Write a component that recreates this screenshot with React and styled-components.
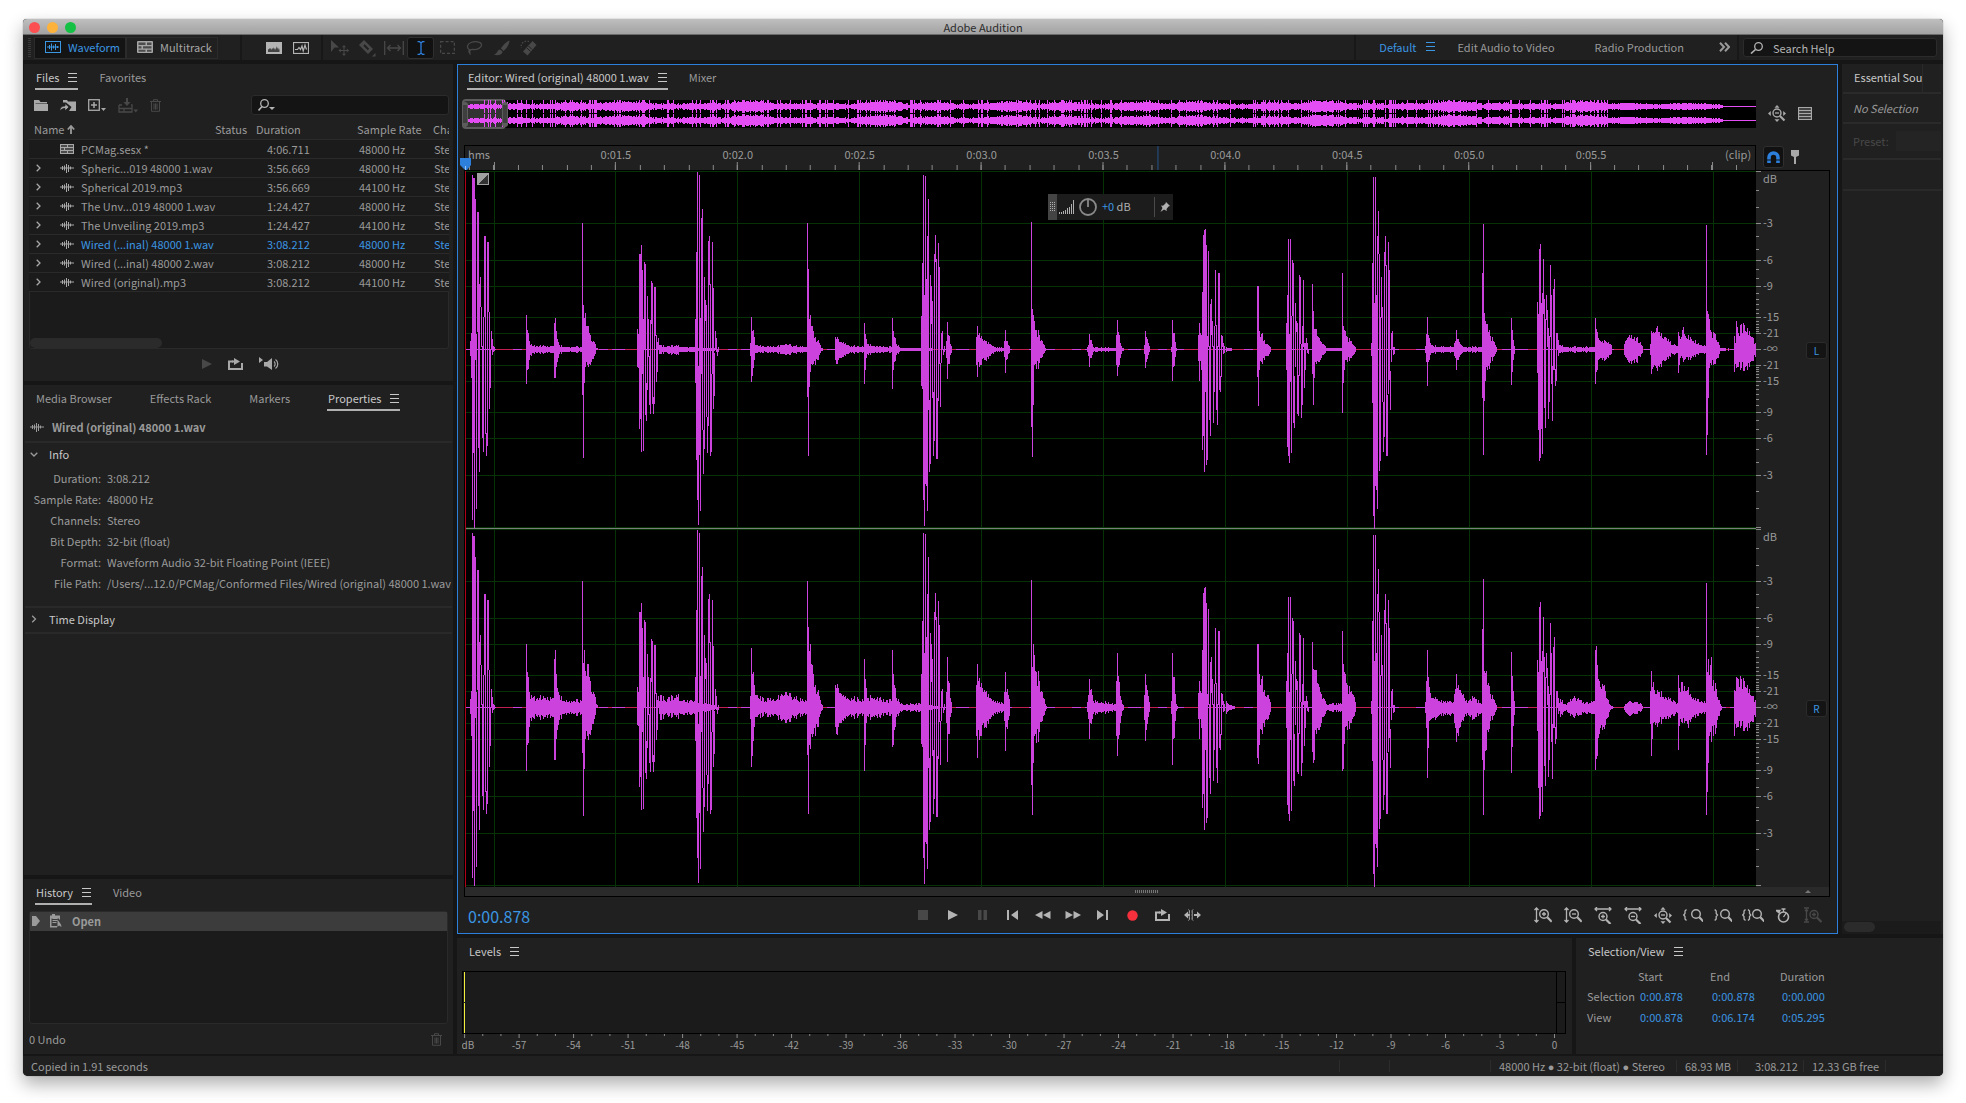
import React from 'react';
import styled, { createGlobalStyle, css } from 'styled-components';

const colors = {
  gap: '#161616',
  panel: '#202020',
  well: '#1b1b1b',
  line: '#2a2a2a',
  text: '#9a9a9a',
  bright: '#c8c8c8',
  dim: '#484848',
  blue: '#3b96e3',
  accent: '#2d7fdc',
  wave: '#cc42dc',
  waveLight: '#e44cf4',
  grid: '#053305',
};

const GlobalStyle = createGlobalStyle`
  * { box-sizing: border-box; }
  body {
    margin: 0;
    background: #fff;
    color: ${colors.text};
    font-family: "Noto Sans CJK SC", "Liberation Sans", sans-serif;
    font-size: 11px;
    line-height: 16px;
  }
  button, input {
    font: inherit;
    color: inherit;
    background: none;
    border: 0;
    padding: 0;
    margin: 0;
    outline: none;
  }
  svg { display: block; }
`;

/* ---------- waveform data ---------- */

// one [top, bottom] pair per pixel column, measured from the centre line
const columns = [
  { x: 5, cols: [[8,-6],[16,-28],[174,-170],[171,-103],[171,-178],[150,-10],[15,-159],[137,18],[137,-98],[65,-122],[72,43],[42,3],[3,-88],[32,-102],[113,33],[113,-84],[-84,-106],[107,-96],[107,38],[37,-59],[0,-38],[18,0],[10,-5],[3,-2],[2,-1]] },
  { x: 172, cols: [[20,-17],[15,-18],[95,-79],[95,-69],[104,-102],[79,-24],[30,-101],[87,0],[85,-65],[-34,-71],[53,-40],[30,-7],[-7,-55],[29,-64],[68,26],[66,-54],[-48,-64],[62,-54],[62,14],[14,-32],[7,-22],[11,0],[4,-4]] },
  { x: 230, cols: [[30,-33],[97,-110],[177,-150],[-17,-175],[174,-105],[31,-161],[131,-24],[140,-80],[-81,-124],[72,-99],[49,29],[44,-67],[-68,-103],[108,-76],[113,65],[65,-106],[-25,-102],[107,-24],[61,-59],[-4,-46],[18,0],[11,-2],[0,-6],[2,-2]] },
  { x: 456, cols: [[33,-36],[86,-39],[174,-150],[54,-176],[173,-134],[70,-136],[113,-161],[150,-60],[-51,-122],[74,-114],[63,26],[48,-48],[-43,-106],[95,-91],[114,88],[90,-109],[-49,-109],[106,-51],[82,-14],[-14,-57],[16,-13],[18,0],[0,-5],[3,-2]] },
  { x: 733, cols: [[14,-11],[26,-31],[16,-11],[14,-20],[57,-100],[114,-86],[119,-122],[120,-42],[104,-115],[13,-110],[98,3],[3,-70],[45,-86],[50,15],[28,3],[3,-73],[23,-42],[79,24],[24,-60],[3,-75],[76,3],[76,-40],[-27,-42],[14,-27],[13,3],[6,-4],[3,-3]] },
  { x: 821, cols: [[26,-20],[54,-97],[110,-106],[15,-113],[110,-32],[33,-103],[89,34],[86,-73],[-27,-78],[46,-17],[28,18],[26,-64],[-26,-66],[74,-26],[72,6],[5,-68],[23,-55],[69,3],[6,-38],[6,-20],[11,0],[6,-3],[0,-4]] },
  { x: 906, cols: [[6,-6],[86,-53],[172,-166],[46,-179],[172,-136],[54,-140],[113,-159],[138,96],[95,-121],[32,-111],[72,32],[42,-52],[-53,-102],[97,-87],[113,84],[84,-106],[-46,-106],[107,-44],[79,-30],[-22,-60],[16,-12],[18,0],[2,-5],[2,-4]] },
  { x: 1072, cols: [[47,-23],[35,-80],[100,-111],[105,-108],[46,-79],[56,-104],[90,36],[50,-58],[30,-78],[54,30],[39,3],[21,-69],[13,-52],[84,13],[54,-34],[-17,-71],[60,-20],[70,-20],[-20,-36],[16,-31],[16,0],[9,-6],[4,-3]] },
];

// envelope points: [x, up, down]
const leftStart = [
  [0,0,0],[60,0,0],[61,34,34],[62,19,20],[63,16,19],[64,8,10],[67,3,3],[88,3,3],[89,26,28],[90,31,28],[91,18,17],[92,10,12],[94,4,4],[98,2,2],[116,2,2],
  [117,126,45],[118,44,108],[119,31,33],[120,36,17],[122,23,15],[124,16,14],[126,8,12],[129,7,6],[131,1,0],[133,0,0],[193,0,0],[195,4,4],[200,2,2],[211,4,5],[216,2,2],[229,2,2],
  [254,0,0],[284,0,0],[285,6,6],[286,32,32],[287,18,26],[288,19,18],[289,12,10],[290,4,3],[300,2,2],[322,4,4],[341,2,2],
  [342,126,47],[343,80,106],[344,30,37],[345,34,22],[346,23,14],[348,18,14],[350,12,15],[352,8,10],[354,6,5],[356,1,1],[358,0,0],[369,0,0],
  [370,12,10],[371,10,14],[373,10,10],[376,7,8],[380,6,6],[386,3,3],[398,2,2],[399,26,34],[400,15,20],[401,10,8],[403,5,5],[406,3,3],[426,2,2],
  [427,31,39],[428,18,20],[429,12,12],[431,5,5],[435,1,1],[455,1,1],[480,0,0],[481,8,8],[482,27,29],[483,14,14],[484,13,14],[485,5,5],[487,0,0],[510,0,0],
  [511,12,15],[512,23,27],[513,14,12],[515,11,15],[517,10,9],[520,8,10],[524,5,6],[530,2,2],[538,1,1],[539,8,7],[540,19,23],[541,8,10],[543,4,4],[545,0,0],[565,0,0],
  [566,127,77],[567,40,107],[568,34,55],[569,28,15],[571,19,19],[574,14,13],[577,8,7],[580,1,1],[582,0,0],[621,0,0],[623,4,6],[624,15,17],[625,9,8],[628,2,2],[650,1,1],
  [651,14,15],[652,29,26],[653,17,17],[655,6,8],[657,1,1],[659,0,0],[678,0,0],[679,4,4],[680,18,18],[681,12,12],[683,6,5],[685,0,0],[705,0,0],[706,2,2],[707,29,31],[708,16,17],[709,16,16],[711,1,1],[713,0,0],
  [760,0,0],[761,2,2],[763,1,1],[770,0,0],[791,0,0],[792,63,27],[793,63,56],[794,18,20],[796,15,12],[799,9,10],[803,4,6],[806,0,0],[846,0,0],
  [847,65,24],[848,38,55],[849,20,28],[850,20,12],[852,13,11],[855,8,10],[858,5,5],[861,1,1],[876,1,1],[877,76,63],[878,23,33],[880,18,10],[882,12,12],[885,8,8],[888,4,5],[891,0,0],[959,0,0],
];

const leftEnd = [
  [960,3,3],[961,15,12],[962,32,36],[963,14,12],[965,6,5],[968,3,3],[973,2,2],[988,2,2],[990,8,8],[991,19,20],[992,10,10],[995,5,5],[998,2,2],[1016,2,2],
  [1017,76,48],[1018,125,105],[1019,36,51],[1020,28,31],[1021,25,17],[1023,17,16],[1025,13,13],[1028,8,7],[1032,0,0],[1045,0,0],[1046,31,35],[1047,19,22],[1048,9,10],[1050,0,0],[1094,0,0],
  [1095,4,3],[1100,2,2],[1129,2,2],[1130,31,34],[1131,20,22],[1132,17,20],[1133,11,10],[1137,8,10],[1142,6,7],[1146,4,4],[1147,0,0],[1158,0,0],
  [1159,5,5],[1162,11,10],[1166,14,14],[1171,11,12],[1175,7,7],[1177,3,3],[1178,0,0],[1184,0,0],[1185,5,5],[1186,18,24],[1188,17,17],[1191,21,18],[1195,13,14],[1199,12,11],[1204,7,6],[1208,4,4],[1212,3,3],
  [1213,17,23],[1215,10,8],[1217,19,8],[1219,15,10],[1222,10,7],[1225,12,10],[1230,9,7],[1235,4,3],[1240,3,3],[1241,124,105],[1242,38,85],[1243,35,48],[1244,30,18],[1246,17,15],[1249,16,14],[1252,7,8],[1255,1,1],[1268,0,0],
  [1269,13,22],[1270,6,14],[1271,28,18],[1273,16,17],[1276,25,18],[1280,18,17],[1285,13,12],[1291,5,6],
];

const rightEnd = [
  [960,5,5],[961,26,20],[962,57,70],[963,30,40],[964,20,13],[966,9,11],[970,10,12],[975,5,6],[988,5,6],[990,18,20],[991,33,34],[992,19,25],[996,14,14],[1000,6,6],[1005,8,9],[1010,8,9],[1016,3,5],
  [1017,78,52],[1018,128,107],[1019,36,62],[1020,34,43],[1022,22,22],[1025,13,13],[1028,8,8],[1032,0,0],[1045,0,0],[1046,55,65],[1047,31,39],[1048,16,18],[1050,0,0],[1094,0,0],
  [1095,8,9],[1101,2,2],[1105,8,8],[1110,9,8],[1120,4,5],[1129,6,6],[1130,57,62],[1131,61,51],[1132,42,48],[1134,26,26],[1138,21,19],[1141,9,11],[1145,2,2],[1148,0,0],[1158,0,0],
  [1160,3,4],[1165,6,8],[1170,5,6],[1176,3,3],[1178,0,0],[1184,0,0],[1185,16,16],[1186,36,48],[1187,20,31],[1188,25,15],[1190,13,17],[1194,15,14],[1198,10,11],[1206,6,7],[1212,4,5],
  [1213,32,42],[1214,19,18],[1216,25,14],[1218,16,10],[1222,17,16],[1225,13,14],[1232,8,8],[1240,4,4],[1241,124,107],[1242,35,84],[1243,48,55],[1245,42,24],[1248,27,28],[1251,18,20],[1253,7,8],[1257,0,0],[1268,0,0],
  [1269,17,28],[1271,30,20],[1276,28,18],[1280,20,20],[1285,12,14],[1291,6,8],
];

const widen = (v) => {
  if (v < 5) return v * 3;
  return v < 35 ? Math.round(v * 1.85) : v;
};
const rightStart = leftStart.map(([x, up, down]) => [x, widen(up), widen(down)]);

const noise = (n) => {
  const v = Math.sin(n * 127.1 + 31.7) * 43758.5453;
  return v - Math.floor(v);
};

const bar = (x, top, bottom) => `M${x} ${top}h1V${bottom}h-1z`;

const buildChannel = (points, centre) => {
  let d = '';
  for (let i = 0; i < points.length - 1; i++) {
    const [x1, u1, d1] = points[i];
    const [x2, u2, d2] = points[i + 1];
    for (let x = x1; x < x2; x++) {
      const t = (x - x1) / (x2 - x1);
      const wobble = x === x1 ? 1 : 0.65 + noise(x) * 0.7;
      const up = Math.round((u1 + (u2 - u1) * t) * wobble);
      const down = Math.round((d1 + (d2 - d1) * t) * wobble);
      if (up + down > 0) d += bar(x, centre - up, centre + down + 1);
    }
  }
  columns.forEach(({ x, cols }) => {
    cols.forEach(([hi, lo], i) => {
      d += bar(x + i, centre - hi, centre - lo + 1);
    });
  });
  return d;
};

const WAVE_W = 1291;
const WAVE_H = 716;
const leftPath = buildChannel([...leftStart, ...leftEnd], 178);
const rightPath = buildChannel([...rightStart, ...rightEnd], 536);

const buildOverview = () => {
  let d = '';
  for (let x = 0; x < WAVE_W; x++) {
    let h;
    if (x > 1257) h = 0;
    else if (x > 1142) h = 1 + Math.round(Math.abs(Math.sin(x / 19)) * 1.4 + noise(x) * 0.8);
    else if (x < 38) h = noise(x * 3) > 0.8 ? 6 : 1 + Math.round(noise(x) * 1.6);
    else {
      const swell = Math.abs(Math.sin(x / 14) + Math.sin(x / 37)) * 1.3;
      h = noise(x * 7) > 0.84 ? 6 : 1 + Math.round(swell + noise(x) * 2);
    }
    const top = Math.min(h, 6);
    d += bar(x, 6 - top, 7 + top) + bar(x, 20 - top, 21 + top);
  }
  return d;
};
const overviewPath = buildOverview();

const pct = (v, total) => `${(v / total) * 100}%`;

const majorTicks = [...Array(11)].map((_, i) => Math.floor(29 + i * 121.9));
const minorTicks = [...Array(53)].map((_, i) => Math.floor(4.6 + i * 24.38));
const gridLevels = [0, 52, 89, 115, 146, 162, 194, 210, 241, 267, 304, 356];
const dbMinor = [19, 36, 65, 78, 98, 107, 122, 128, 133, 138, 142, 150, 153, 156, 158, 160];
const dbLabels = [
  [52, '-3'], [89, '-6'], [115, '-9'], [146, '-15'], [162, '-21'], [178, '-∞'],
  [194, '-21'], [210, '-15'], [241, '-9'], [267, '-6'], [304, '-3'],
];

/* ---------- icons ---------- */

const lens = (x, y, r) => (
  <>
    <circle cx={x} cy={y} r={r} fill="none" stroke="currentColor" strokeWidth="1.4" />
    <path d={`M${x + r - 1} ${y + r - 1}l4.5 4.5`} stroke="currentColor" strokeWidth="2.2" />
  </>
);
const line = { fill: 'none', stroke: 'currentColor', strokeWidth: 1.3 };

const icons = {
  waveform: [16, 12, <><rect x=".5" y=".5" width="15" height="11" {...line} strokeWidth="1" /><path d="M2 6h12M4.5 4v4M6.5 2.500v7M8.500 4.500v3M10.500 3v6M12.500 5v2" {...line} strokeWidth="1" /></>],
  multitrack: [16, 12, <><rect width="16" height="12" rx="1" fill="currentColor" /><path d="M1.500 1.500h7v2.500h-7zM10 1.500h4.500v2.500H10zM1.500 5.200h3v2.300h-3zM6 5.200h8.500v2.300H6zM1.500 8.700h7v2h-7zM10 8.700h4.500v2H10z" fill="#4c4c4c" /></>],
  session: [14, 10, <><rect width="14" height="10" fill="currentColor" /><path d="M1 1h6v2H1zM8 1h5v2H8zM1 4h3v2H1zM5 4h8v2H5zM1 7h6v2H1zM8 7h5v2H8z" fill="#4c4c4c" /></>],
  spectral: [16, 12, <><rect width="16" height="12" fill="currentColor" /><path d="M2 10V7.500l1-.5V6l1 1 1-1 .5 2 1-2 .5 1V5l1 2 .5-1 .5 2 1-2 .5-2 .5 3 1-2 .5 3 .5-2 .5 2V10z" fill="#444" /></>],
  pitch: [16, 12, <><rect x=".5" y=".5" width="15" height="11" {...line} strokeWidth="1.200" /><path d="M2 7.500h2.500L6 5.500l1.500 2L9 4l1.200 5L12 3l1.200 4H14" {...line} strokeWidth="1.200" /></>],
  move: [18, 16, <><path d="M0 0l8 7.500H3.500L0 12z" fill="currentColor" /><path d="M13 6v9M8.500 10.500h9" {...line} strokeWidth="1" /><path d="M13 5l2 2.200h-4zM13 16l2-2.200h-4zM7.500 10.500l2.200-2v4zM18 10.500l-2.200-2v4z" fill="currentColor" /></>],
  razor: [18, 18, <><path d="M6 1l9 9-5 5-9-9z" fill="currentColor" /><path d="M6 6l4.500 4.500" stroke="#202020" strokeWidth="2" /><path d="M17.500 14v3.500H14z" fill="currentColor" /></>],
  slip: [20, 14, <path d="M.7 0v14M19.300 0v14M3.500 7h13M6.500 4L3.500 7l3 3M13.500 4l3 3-3 3" {...line} />],
  ibeam: [8, 14, <path d="M.5.7h2L4 2l1.500-1.300h2M4 2v10M.5 13.300h2L4 12l1.500 1.300h2" {...line} />],
  marquee: [15, 13, <rect x=".6" y=".6" width="13.800" height="11.800" {...line} strokeDasharray="3 2" />],
  lasso: [17, 14, <path d="M4 9C0 7 1 3 5 1.500s10-1 10.500 2S11 9 7 8.500 3 12 4.500 13.500M4 9c-2 1-1 3 .5 2.500" {...line} />],
  brush: [16, 16, <path d="M15.500.5c-3 1-7 5-8.500 8l2.500 2.500c3-2 6-7 6-10.500zM6 9.500c-3 0-2 4-6 5 3 1.500 8.500.5 8.500-3z" fill="currentColor" />],
  heal: [17, 16, <><path d="M12.500 1l4 4L7.500 15.500l-4.500-4z" fill="currentColor" /><path d="M8.500 6l3.500 3.500M7 8l3.500 3.500" stroke="#202020" strokeWidth="1" /><path d="M9 1.500C5 0 0 3 1.500 8" {...line} strokeDasharray="1.500 1.500" /></>],
  menu: [9, 9, <path d="M0 .5h9M0 4.500h9M0 8.500h9" {...line} strokeWidth="1" />],
  more: [11, 10, <path d="M1 .8L5 5 1 9.200M6 .8L10 5 6 9.200" {...line} strokeWidth="2" />],
  search: [14, 12, <><circle cx="8.500" cy="4.500" r="3.800" {...line} /><path d="M5.500 7.500L1 11.500" {...line} strokeWidth="1.600" /></>],
  searchDrop: [17, 12, <><circle cx="6.500" cy="4.500" r="3.800" {...line} /><path d="M4 7.500L.5 11.500" {...line} strokeWidth="1.600" /><path d="M11 8h6l-3 3z" fill="currentColor" /></>],
  folder: [14, 11, <path d="M0 0h5l1.500 2H13v1.500H1.500V4H14v7H0z" fill="currentColor" />],
  importFile: [16, 13, <><path d="M3 1h4l1 1.500h8V12H9l2.500-4L6 3.500H3z" fill="currentColor" /><path d="M0 12c0-4 2-5 5-5V4.500L9 8l-4 4V9.500C3 9.500 1.500 10 0 12z" fill="currentColor" stroke="#202020" strokeWidth=".8" /></>],
  newFile: [18, 13, <><rect x=".7" y=".7" width="10.600" height="10.600" {...line} /><path d="M6 3v6M3 6h6" {...line} strokeWidth="1.500" /><path d="M13 9h5l-2.500 3z" fill="currentColor" /></>],
  insert: [20, 15, <><path d="M8 0h2v4h2.500L9 8 5.500 4H8z" fill="currentColor" /><path d="M1 7h3M13 7h1v7H1V7M1 10.500h13M6 10.500V14" {...line} /><path d="M15.500 11.500h4.500l-2.200 3z" fill="currentColor" /></>],
  trash: [11, 13, <path d="M0 2.500h11M3.500 2V.7h4V2M1.500 3v9.300h8V3M4 4.500v6M5.500 4.500v6M7 4.500v6" {...line} strokeWidth="1" />],
  arrowUp: [8, 9, <path d="M4 9V1.500M.8 4.500L4 1l3.200 3.500" {...line} strokeWidth="1.800" />],
  chevron: [5, 8, <path d="M.7.7L4 4 .7 7.300" {...line} />],
  chevronDown: [8, 5, <path d="M.7.7L4 4 7.300.7" {...line} />],
  clip: [14, 10, <path d="M0 5h14M2.500 3v4M4.500 2.500v5M6.500 1v9M8.500 2v7M10.500 3.500v3" {...line} strokeWidth="1" />],
  play: [10, 10, <path d="M0 0l10 5-10 5z" fill="currentColor" />],
  loop: [15, 12, <><path d="M5 3.500H1V11h13V5" {...line} strokeWidth="2" /><path d="M6 0l6 3.500L6 7V4.500H4v-2h2z" fill="currentColor" /></>],
  speaker: [21, 14, <><path d="M0 0l4 3-4 3zM5 5h3l5-4v12L8 9.500H5z" fill="currentColor" /><path d="M15 4.500c1.500 1 1.500 4 0 5M16.500 2.500c3 2 3 7 0 9" {...line} strokeWidth="1.200" /></>],
  stop: [10, 10, <rect width="10" height="10" fill="currentColor" />],
  pause: [9, 10, <path d="M0 0h3.500v10H0zM5.500 0H9v10H5.500z" fill="currentColor" />],
  toStart: [11, 10, <path d="M0 0h2v10H0zM11 0v10L4 5z" fill="currentColor" />],
  toEnd: [11, 10, <path d="M9 0h2v10H9zM0 0v10l7-5z" fill="currentColor" />],
  rewind: [16, 8, <path d="M7.500 0v8L0 4zM15.500 0v8L8 4z" fill="currentColor" />],
  forward: [16, 8, <path d="M.5 0v8L8 4zM8.500 0v8L16 4z" fill="currentColor" />],
  record: [11, 11, <circle cx="5.500" cy="5.500" r="5.200" fill="#f4303c" />],
  skip: [17, 12, <><path d="M0 6l4-3.500v2.500h1v2H4v2.500zM17 6l-4-3.500v2.500h-3v2h3v2.500z" fill="currentColor" /><path d="M4.500.5c2 1 0 4 1 5.500-1 1.500 1 4.500-1 5.500M9 .5c-2 1 0 4-1 5.500 1 1.500-1 4.500 1 5.500" {...line} strokeWidth="1" /></>],
  zoomInV: [18, 16, <><path d="M2.500 1v14M.5 3l2-2 2 2M.5 13l2 2 2-2" {...line} />{lens(10, 7, 4.300)}<path d="M10 5v4M8 7h4" {...line} /></>],
  zoomOutV: [18, 16, <><path d="M2.500 1v14M.5 3l2-2 2 2M.5 13l2 2 2-2" {...line} />{lens(10, 7, 4.300)}<path d="M8 7h4" {...line} /></>],
  zoomInH: [18, 17, <><path d="M1 2h16M3 0L1 2l2 2M15 0l2 2-2 2" {...line} />{lens(9, 9.500, 4)}<path d="M9 7.500v4M7 9.500h4" {...line} /></>],
  zoomOutH: [18, 17, <><path d="M1 2h16M3 0L1 2l2 2M15 0l2 2-2 2" {...line} />{lens(9, 9.500, 4)}<path d="M7 9.500h4" {...line} /></>],
  zoomFull: [18, 17, <><path d="M9 0l2.500 2.800h-5zM9 17l2.500-2.800h-5zM0 8.500L2.800 6v5zM18 8.500L15.200 6v5z" fill="currentColor" />{lens(9, 8, 4)}<path d="M7 8h4" {...line} /></>],
  zoomStart: [20, 14, <><path d="M3.500 1.500L2 3v2.500L.7 7 2 8.500V11l1.500 1.500" {...line} />{lens(13, 6, 4.300)}</>],
  zoomEnd: [18, 14, <><path d="M.7 1.500L2.200 3v2.500L3.500 7 2.200 8.500V11L.7 12.500" {...line} />{lens(11, 6, 4.300)}</>],
  zoomSel: [22, 14, <><path d="M3.500 1.500L2 3v2.500L.7 7 2 8.500V11l1.500 1.500M6 1.500L7.500 3v2.500L8.800 7 7.500 8.500V11L6 12.500" {...line} />{lens(15, 6, 4.300)}</>],
  timer: [14, 15, <><circle cx="7.500" cy="9" r="5" {...line} strokeWidth="1.600" /><path d="M5.500 1h4M7.500 1v3M7.500 9l3-4.500M0 2.500l3 2.500 1-2.500z" fill="currentColor" stroke="currentColor" strokeWidth="1.300" /></>],
  zoomSlot: [18, 16, <><path d="M0 1h5M0 15h5M2.500 2v12M1 4l1.500-1.500L4 4M1 12l1.500 1.500L4 12" {...line} />{lens(10, 7.500, 4)}<path d="M10 5.500v4M8 7.500h4" {...line} /></>],
  list: [14, 13, <path d="M.5.5h13v12H.5zM1 3.500h12M1 6.500h12M1 9.500h12" {...line} />],
  magnet: [13, 13, <><path d="M2 12V6.500a4.500 4.500 0 0 1 9 0V12" {...line} strokeWidth="3.600" /><path d="M0 9h5M8 9h5" stroke="#111" strokeWidth="1" /></>],
  marker: [8, 14, <path d="M0 0h8v5.500L5 7v7H3V7L0 5.500z" fill="currentColor" />],
  bars: [15, 14, <path d="M.5 12v2M2.500 12v2M4.500 11v3M6.500 10v4M8.500 8v6M10.500 7v7M12.500 4v10M14.500 0v14" {...line} strokeWidth="1" />],
  knob: [18, 18, <><circle cx="9" cy="9" r="8" {...line} strokeWidth="1.800" stroke="#8a8a8a" /><path d="M9 2v7" {...line} strokeWidth="1.800" stroke="#8a8a8a" /></>],
  pin: [10, 10, <path d="M6 0l4 4-1.500.5L6.500 7l.3 2L4 7.500.5 10 2.500 6 1 3.500l2 .3L5.500 1.500z" fill="currentColor" />],
  grip: [9, 10, <path d="M2.500 0v10M4.500 0v10M6.500 0v10" {...line} strokeWidth="1" strokeDasharray="1 1" />],
  historyOpen: [12, 14, <><path d="M0 1.500h2V0h3v1.500h5V6L9 5v-.500H1.500V12H7v1.500H0z" fill="currentColor" /><path d="M2.500 4.500h5M2.500 6.500h5M2.500 8.500h4" {...line} strokeWidth="1" /><path d="M7.500 5.500V13l1.500-1.500 2.500 1.500-.5-2.500z" fill="currentColor" /></>],
  here: [8, 10, <path d="M0 0h4l4 5-4 5H0z" fill="currentColor" />],
};

const Icon = ({ name }) => {
  const [w, h, shape] = icons[name];
  return (
    <svg width={w} height={h} viewBox={`0 0 ${w} ${h}`} aria-hidden="true">
      {shape}
    </svg>
  );
};

/* ---------- frame ---------- */

const Page = styled.div`
  height: 100vh;
  padding: 19px 23px 27px;
  display: flex;
`;

const Window = styled.main`
  flex: 1;
  min-width: 0;
  display: flex;
  flex-direction: column;
  background: ${colors.gap};
  border-radius: 4px 4px 5px 5px;
  box-shadow: 0 0 1px #555, 0 8px 18px rgba(0, 0, 0, 0.32);
`;

const TitleBar = styled.header`
  height: 16px;
  flex: none;
  display: grid;
  grid-template-columns: 1fr auto 1fr;
  align-items: center;
  padding: 0 6px 1px;
  background: linear-gradient(#bfbfbf, #a2a2a2);
  border-bottom: 1px solid #6a6a6a;
  border-radius: 4px 4px 0 0;
  color: #2b2b2b;
`;

const Lights = styled.div`
  display: flex;
  gap: 7px;
`;

const Light = styled.button`
  width: 11px;
  height: 11px;
  border-radius: 50%;
  background: ${props => props.$color};
`;

const Toolbar = styled.div`
  height: 25px;
  flex: none;
  display: flex;
  align-items: center;
  background: ${colors.panel};
`;

const Grip = styled.span`
  width: 3px;
  height: 20px;
  margin: 0 3px 0 5px;
  background: repeating-linear-gradient(#3a3a3a 0 1px, transparent 1px 2px);
`;

const ModeButton = styled.button`
  display: flex;
  align-items: center;
  gap: 7px;
  height: 22px;
  width: 92px;
  padding: 0 0 2px 10px;
  border: 1px solid #2b2b2b;
  background: ${props => (props.$active ? '#141414' : colors.panel)};
  color: ${props => (props.$active ? colors.blue : '#a6a6a6')};
`;

const Divider = styled.span`
  width: 2px;
  height: 25px;
  background: #181818;
`;

const ToolGroup = styled.div`
  display: flex;
  align-items: center;
  justify-content: ${props => (props.$end ? 'flex-end' : 'flex-start')};
  gap: ${props => props.$gap || 0}px;
  padding: ${props => props.$pad || 0};
`;

const Tool = styled.button`
  width: ${props => props.$width || 27}px;
  height: 22px;
  display: flex;
  align-items: center;
  justify-content: center;
  border-radius: 3px;
  color: ${props => (props.$bright ? '#b4b4b4' : colors.dim)};
  ${props => props.$active && css`
    background: #111;
    border: 1px solid #2f2f2f;
    color: ${colors.accent};
  `}
`;

const Workspaces = styled.nav`
  margin-left: auto;
  display: flex;
  align-items: center;
`;

const Workspace = styled.button`
  display: flex;
  align-items: center;
  gap: 10px;
  padding-bottom: 2px;
  margin-left: ${props => props.$space}px;
  white-space: nowrap;
  color: ${props => (props.$active ? colors.blue : colors.text)};
`;

const SearchBox = styled.label`
  display: flex;
  align-items: center;
  gap: 9px;
  flex: none;
  width: ${props => props.$width}px;
  height: ${props => props.$height}px;
  margin: ${props => props.$margin || 0};
  padding-left: 6px;
  background: #141414;
  border: 1px solid #2b2b2b;
  border-radius: 3px;
  color: #b4b4b4;

  input {
    flex: 1;
    min-width: 0;
  }
  input::placeholder {
    color: #b4b4b4;
    opacity: 1;
  }
`;

const Body = styled.div`
  flex: 1;
  min-height: 0;
  display: flex;
  gap: 4px;
  padding: 4px 0 2px 1px;
`;

const Column = styled.div`
  display: flex;
  flex-direction: column;
  gap: 4px;
  min-width: 0;
  min-height: 0;
  ${props => (props.$width ? `flex: none; width: ${props.$width}px;` : 'flex: 1;')}
`;

const Split = styled.div`
  display: flex;
  gap: 4px;
  min-height: 0;
  ${props => (props.$height ? `flex: none; height: ${props.$height}px;` : 'flex: 1;')}
`;

const Panel = styled.section`
  display: flex;
  flex-direction: column;
  min-width: 0;
  min-height: 0;
  background: ${colors.panel};
  ${props => (props.$height ? `flex: none; height: ${props.$height}px;` : '')}
  ${props => (props.$width ? `flex: none; width: ${props.$width}px;` : '')}
  ${props => (!props.$height && !props.$width ? 'flex: 1;' : '')}
`;

const Tabs = styled.nav`
  display: flex;
  flex: none;
  align-items: flex-start;
  gap: ${props => props.$gap || 20}px;
  padding: ${props => props.$top || 5}px 0 0 ${props => props.$left || 11}px;
  height: ${props => props.$height || 30}px;
`;

const Tab = styled.button`
  display: flex;
  align-items: center;
  gap: 9px;
  height: 21px;
  padding: 0 1px 3px;
  white-space: nowrap;
  color: ${props => (props.$active ? colors.bright : colors.text)};
  border-bottom: 2px solid ${props => (props.$active && !props.$plain ? '#b0b0b0' : 'transparent')};
`;

/* ---------- left column ---------- */

const FileTools = styled.div`
  display: flex;
  align-items: center;
  gap: 12px;
  height: 22px;
  padding: 0 4px 0 10px;
`;

const FileTool = styled.button`
  flex: none;
  display: flex;
  color: ${props => (props.$off ? colors.dim : '#a8a8a8')};
`;

const FileList = styled.div`
  height: 229px;
  margin: 4px 4px 0 5px;
  display: flex;
  flex-direction: column;
  overflow: hidden;
`;

const FileTable = styled.table`
  width: 100%;
  table-layout: fixed;
  border-collapse: collapse;

  th {
    height: 19px;
    padding: 0 0 0 5px;
    text-align: left;
    font-weight: 400;
    white-space: nowrap;
  }
  td {
    height: 19px;
    padding: 0 0 0 ${props => props.$indent || 5}px;
    white-space: nowrap;
    border-top: 1px solid ${colors.line};
    border-bottom: 1px solid ${colors.line};
  }
  td:nth-child(3) { padding-left: 16px; }
  td:nth-child(4) { padding-left: 7px; }
  td:last-child { padding-left: 6px; }
`;

const FileRow = styled.tr`
  background: ${colors.well};
  color: ${props => (props.$active ? colors.blue : colors.text)};
`;

const NameCell = styled.span`
  display: grid;
  grid-template-columns: 19px 14px 1fr;
  column-gap: 7px;
  align-items: center;

  svg {
    color: #a8a8a8;
  }
  svg:first-child {
    margin-left: 2px;
  }
`;

const Inline = styled.span`
  display: flex;
  align-items: center;
  gap: 3px;
`;

const ListRest = styled.div`
  flex: 1;
  display: flex;
  align-items: flex-end;
  background: ${colors.well};
  border: 1px solid ${colors.line};
  border-top: 0;
  border-radius: 0 0 3px 3px;
`;

const Thumb = styled.span`
  width: ${props => props.$width}px;
  height: 10px;
  border-radius: 5px;
  background: #2b2b2b;
`;

const Preview = styled.div`
  flex: 1;
  display: flex;
  align-items: center;
  justify-content: center;
  gap: 16px;
  padding: 0 0 2px 5px;
  color: #a8a8a8;
`;

const FileHeading = styled.h2`
  display: flex;
  align-items: center;
  gap: 8px;
  margin: 0;
  height: 27px;
  padding: 0 0 2px 6px;
  font-size: 11px;
  font-weight: 700;
`;

const Fold = styled.h3`
  display: flex;
  align-items: center;
  margin: 0 1px;
  padding-bottom: 2px;
  height: 26px;
  border-top: 2px solid #292929;
  font-size: 11px;
  font-weight: 400;
  color: ${colors.bright};

  svg {
    width: 12px;
    margin: 0 9px 0 3px;
    color: ${colors.text};
  }
`;

const Facts = styled.dl`
  display: grid;
  grid-template-columns: 77px 1fr;
  column-gap: 6px;
  margin: 0;
  padding: 1px 0 12px;
  line-height: 21px;
  white-space: nowrap;

  dt { text-align: right; }
  dd { margin: 0; }
`;

const Rule = styled.hr`
  width: auto;
  height: 2px;
  margin: 0 1px;
  border: 0;
  background: #292929;
`;

const HistoryList = styled.div`
  flex: 1;
  margin: 2px 5px 0 5px;
  background: ${colors.well};
  border: 1px solid ${colors.line};
  border-radius: 3px;
`;

const HistoryItem = styled.button`
  display: flex;
  align-items: center;
  width: 100%;
  height: 19px;
  gap: 10px;
  padding: 0 0 2px 2px;
  background: #3c3c3c;
  font-weight: 700;
`;

const HistoryFoot = styled.div`
  display: flex;
  justify-content: space-between;
  align-items: center;
  height: 30px;
  padding: 0 11px 0 5px;
`;

/* ---------- editor ---------- */

const Editor = styled(Panel)`
  border: 1px solid ${colors.accent};
`;

const EditorRow = styled.div`
  flex: none;
  display: flex;
  height: ${props => props.$height}px;
  margin-bottom: ${props => props.$below || 0}px;
  padding-left: 6px;
`;

const Stretch = styled.div`
  flex: 1;
  min-width: 0;
  border: solid #000;
  border-width: ${props => props.$border || 0};
`;

const SideTools = styled.div`
  flex: none;
  width: 81px;
  display: flex;
  align-items: center;
  gap: ${props => props.$gap}px;
  padding: 0 0 1px ${props => props.$left}px;
  color: #a8a8a8;
`;

const Canvas = styled.div`
  flex: 1;
  min-height: 0;
  display: flex;
  margin: 0 7px 0 6px;
  position: relative;
  border: solid #000;
  border-width: 1px 1px 0 1px;
`;

const Fill = styled.svg`
  width: 100%;
  height: 100%;
  overflow: ${props => (props.$spill ? 'visible' : 'hidden')};

  text {
    fill: ${colors.text};
    font-size: ${props => props.$size || 11}px;
  }
`;

const WaveArea = styled.div`
  flex: 1;
  min-width: 0;
  background: #000;
`;

const Scale = styled.div`
  flex: none;
  width: 38px;
`;

const Channels = styled.div`
  flex: none;
  width: 35px;
  display: flex;
  flex-direction: column;
  justify-content: space-around;
  align-items: flex-end;
  padding: 0 2px;
`;

const ChannelButton = styled.button`
  width: 21px;
  height: 17px;
  border: 1px solid #2b2b2b;
  border-radius: 3px;
  background: #141414;
  color: ${colors.blue};
  font-size: 10px;
  line-height: 15px;
`;

const Hud = styled.div`
  position: absolute;
  left: 45.3%;
  margin-left: -35px;
  top: 23px;
  width: 125px;
  height: 26px;
  display: flex;
  align-items: center;
  gap: 5px;
  background: #1c1c1c;
  color: #b0b0b0;

  span { padding-bottom: 2px; }
  b { font-weight: 400; color: ${colors.blue}; }
`;

const HudGrip = styled.i`
  width: 9px;
  height: 26px;
  display: flex;
  align-items: center;
  background: #444;
  margin-right: -3px;
`;

const HudPin = styled.button`
  margin-left: auto;
  margin-right: 3px;
  height: 20px;
  padding-left: 5px;
  border-left: 1px solid #4a4a4a;
`;

const SplitBar = styled.div`
  flex: none;
  height: 10px;
  margin: 0 7px 0 6px;
  display: grid;
  grid-template-columns: 1fr auto 1fr;
  align-items: center;
  background: #2a2a2a;
  border: solid #000;
  border-width: 0 1px 1px 1px;

  i {
    width: 24px;
    height: 3px;
    background: repeating-linear-gradient(90deg, #777 0 1px, transparent 1px 2px);
  }
  svg {
    justify-self: end;
    margin-right: 18px;
  }
`;

const Transport = styled.div`
  flex: none;
  height: 36px;
  display: grid;
  grid-template-columns: 17fr auto 24fr;
  align-items: center;
  padding: 0 9px 0 10px;
`;

const Clock = styled.output`
  font-size: 16px;
  line-height: 20px;
  padding-top: 2px;
  color: ${colors.blue};
`;

/* ---------- bottom and side ---------- */

const Meter = styled.div`
  flex: none;
  height: 63px;
  margin: 2px 6px 0 5px;
  background: ${colors.well};
  border: 1px solid #000;
`;

const MeterScale = styled.div`
  flex: 1;
  min-height: 0;
  margin: 0 6px 0 5px;
`;

const RangeTable = styled.table`
  width: 250px;
  margin-left: 9px;
  border-collapse: collapse;
  table-layout: fixed;

  th, td {
    height: 21px;
    padding: 0 0 0 2px;
    text-align: left;
    font-weight: 400;
  }
  thead th { height: 18px; }
  td { color: ${colors.blue}; padding-left: 4px; }
`;

const SideTitle = styled.h2`
  margin: 0 20px 0 12px;
  height: 28px;
  padding-top: 5px;
  overflow: hidden;
  white-space: nowrap;
  font-size: 11px;
  font-weight: 400;
  color: ${colors.bright};
  border-right: 1px solid #2a2a2a;
`;

const SideRow = styled.div`
  display: flex;
  align-items: center;
  height: ${props => props.$height}px;
  margin: 0 2px 0 1px;
  padding-left: 10px;
  border-top: 2px solid #2a2a2a;
  color: ${props => (props.$off ? colors.dim : colors.text)};
  font-style: ${props => (props.$off ? 'normal' : 'italic')};

  span {
    flex: 1;
    height: 20px;
    margin-left: 7px;
    background: #242424;
  }
`;

const SideScroll = styled.div`
  height: 13px;
  margin: auto 2px 0 0;
  padding: 1px 2px;
  display: flex;
  background: #1b1b1b;
`;

const StatusBar = styled.footer`
  height: 20px;
  flex: none;
  display: flex;
  align-items: center;
  padding-left: 8px;
  background: ${colors.panel};
  border-radius: 0 0 5px 5px;
`;

const StatusItem = styled.span`
  width: ${props => props.$width}px;
  padding-left: ${props => props.$pad || 8}px;
  margin-left: ${props => (props.$first ? 'auto' : 0)};
  height: 12px;
  line-height: 12px;
  border-left: 1px solid #2c2c2c;
  white-space: nowrap;
`;

const Dot = styled.span`
  font-family: "Liberation Sans", sans-serif;
`;

const files = [
  ['PCMag.sesx *', '4:06.711', '48000 Hz', 'session'],
  ['Spheric...019 48000 1.wav', '3:56.669', '48000 Hz'],
  ['Spherical 2019.mp3', '3:56.669', '44100 Hz'],
  ['The Unv...019 48000 1.wav', '1:24.427', '48000 Hz'],
  ['The Unveiling 2019.mp3', '1:24.427', '44100 Hz'],
  ['Wired (...inal) 48000 1.wav', '3:08.212', '48000 Hz'],
  ['Wired (...inal) 48000 2.wav', '3:08.212', '48000 Hz'],
  ['Wired (original).mp3', '3:08.212', '44100 Hz'],
];

const facts = [
  ['Duration:', '3:08.212'],
  ['Sample Rate:', '48000 Hz'],
  ['Channels:', 'Stereo'],
  ['Bit Depth:', '32-bit (float)'],
  ['Format:', 'Waveform Audio 32-bit Floating Point (IEEE)'],
  ['File Path:', '/Users/...12.0/PCMag/Conformed Files/Wired (original) 48000 1.wav'],
];

const tools = ['move', 'razor', 'slip', 'ibeam', 'marquee', 'lasso', 'brush', 'heal'];
const fileTools = ['folder', 'importFile', 'newFile', 'insert', 'trash'];
const transport = ['stop', 'play', 'pause', 'toStart', 'rewind', 'forward', 'toEnd', 'record', 'loop', 'skip'];
const zooms = ['zoomInV', 'zoomOutV', 'zoomInH', 'zoomOutH', 'zoomFull', 'zoomStart', 'zoomEnd', 'zoomSel', 'timer', 'zoomSlot'];

const TopBar = () => (
  <Toolbar>
    <Grip />
    <ModeButton $active><Icon name="waveform" />Waveform</ModeButton>
    <ModeButton><Icon name="multitrack" />Multitrack</ModeButton>
    <ToolGroup $gap={10} $pad="0 7px 0 22px">
      <Divider />
      <ToolGroup $pad="0 0 0 8px">
        <Tool $bright aria-label="Spectral display"><Icon name="spectral" /></Tool>
        <Tool $bright aria-label="Pitch display"><Icon name="pitch" /></Tool>
      </ToolGroup>
    </ToolGroup>
    <Divider />
    <ToolGroup $pad="0 0 0 3px">
      {tools.map(name => (
        <Tool key={name} $active={name === 'ibeam'} aria-label={name}>
          <Icon name={name} />
        </Tool>
      ))}
    </ToolGroup>
    <Workspaces>
      <Divider />
      <Workspace $active $space={23}>Default <Icon name="menu" /></Workspace>
      <Workspace $space={22}>Edit Audio to Video</Workspace>
      <Workspace $space={40}>Radio Production</Workspace>
      <Workspace $space={35} aria-label="More workspaces"><Icon name="more" /></Workspace>
    </Workspaces>
    <ToolGroup $pad="0 4px 0 7px"><Divider /></ToolGroup>
    <SearchBox $width={194} $height={19} $margin="0 6px 0 0">
      <Icon name="search" />
      <input aria-label="Search Help" placeholder="Search Help" />
    </SearchBox>
  </Toolbar>
);

const FilesPanel = () => (
  <Panel $height={317}>
    <Tabs>
      <Tab $active>Files <Icon name="menu" /></Tab>
      <Tab>Favorites</Tab>
    </Tabs>
    <FileTools>
      {fileTools.map(name => (
        <FileTool key={name} $off={name === 'insert' || name === 'trash'} aria-label={name}>
          <Icon name={name} />
        </FileTool>
      ))}
      <SearchBox $width={198} $height={20} $margin="0 0 0 auto">
        <Icon name="searchDrop" />
        <input aria-label="Search files" />
      </SearchBox>
    </FileTools>
    <FileList>
      <FileTable>
        <colgroup>
          <col style={{ width: 181 }} />
          <col style={{ width: 41 }} />
          <col style={{ width: 101 }} />
          <col style={{ width: 76 }} />
          <col />
        </colgroup>
        <thead>
          <tr>
            <th><Inline>Name <Icon name="arrowUp" /></Inline></th>
            <th>Status</th>
            <th>Duration</th>
            <th>Sample Rate</th>
            <th>Cha</th>
          </tr>
        </thead>
        <tbody>
          {files.map(([name, duration, rate, session], i) => (
            <FileRow key={name} $active={i === 5}>
              <td>
                <NameCell>
                  {session ? <span /> : <Icon name="chevron" />}
                  <Icon name={session ? 'session' : 'clip'} />
                  {name}
                </NameCell>
              </td>
              <td />
              <td>{duration}</td>
              <td>{rate}</td>
              <td>Ste</td>
            </FileRow>
          ))}
        </tbody>
      </FileTable>
      <ListRest><Thumb $width={132} /></ListRest>
    </FileList>
    <Preview>
      <FileTool $off aria-label="Play"><Icon name="play" /></FileTool>
      <FileTool aria-label="Loop"><Icon name="loop" /></FileTool>
      <FileTool aria-label="Auto-play"><Icon name="speaker" /></FileTool>
    </Preview>
  </Panel>
);

const PropertiesPanel = () => (
  <Panel>
    <Tabs $gap={36} $height={29}>
      <Tab>Media Browser</Tab>
      <Tab>Effects Rack</Tab>
      <Tab>Markers</Tab>
      <Tab $active>Properties <Icon name="menu" /></Tab>
    </Tabs>
    <FileHeading><Icon name="clip" />Wired (original) 48000 1.wav</FileHeading>
    <Fold><Icon name="chevronDown" />Info</Fold>
    <Facts>
      {facts.map(([label, value]) => (
        <React.Fragment key={label}>
          <dt>{label}</dt>
          <dd>{value}</dd>
        </React.Fragment>
      ))}
    </Facts>
    <Fold><Icon name="chevron" />Time Display</Fold>
    <Rule />
  </Panel>
);

const HistoryPanel = () => (
  <Panel $height={175}>
    <Tabs>
      <Tab $active>History <Icon name="menu" /></Tab>
      <Tab>Video</Tab>
    </Tabs>
    <HistoryList>
      <HistoryItem><Icon name="here" /><Icon name="historyOpen" />Open</HistoryItem>
    </HistoryList>
    <HistoryFoot>
      0 Undo
      <Tool $width={11} aria-label="Delete"><Icon name="trash" /></Tool>
    </HistoryFoot>
  </Panel>
);

const Overview = () => (
  <Fill viewBox={`0 0 ${WAVE_W} 28`} preserveAspectRatio="none" $spill>
    <rect width={WAVE_W} height="28" fill="#000" />
    <rect x="-2" y="0" width="42" height="28" rx="3" fill="#333" stroke="#5c5c5c" strokeWidth="2" />
    <path d={overviewPath} fill={colors.waveLight} shapeRendering="crispEdges" />
    {[-3, 37].map(x => (
      <g key={x}>
        <rect x={x} y="2" width="6" height="25" rx="3" fill="#5c5c5c" />
        <path d={`M${x + 2} 5v18M${x + 4} 5v18`} stroke="#222" />
      </g>
    ))}
  </Fill>
);

const Ruler = () => (
  <Fill $spill>
    {minorTicks.map(x => (
      <line key={x} x1={pct(x + 0.5, WAVE_W)} x2={pct(x + 0.5, WAVE_W)} y1="19" y2="24" stroke="#8a8a8a" />
    ))}
    {majorTicks.map(x => (
      <line key={x} x1={pct(x + 0.5, WAVE_W)} x2={pct(x + 0.5, WAVE_W)} y1="16" y2="24" stroke="#8a8a8a" />
    ))}
    <text x="3" y="13">hms</text>
    {majorTicks.slice(1, 10).map((x, i) => (
      <text key={x} x={pct(x + 1, WAVE_W)} y="13" textAnchor="middle">
        {`0:0${(1.5 + i * 0.5).toFixed(1)}`}
      </text>
    ))}
    <text x="99.7%" y="13" textAnchor="end">(clip)</text>
    <line x1={pct(693.5, WAVE_W)} x2={pct(693.5, WAVE_W)} y1="0" y2="24" stroke="#24548c" />
    <path d="M-5 12H6v7l-4 5H0l-5-5z" fill={colors.accent} />
    <path d="M.5 20v5" stroke="#9bc4f2" />
  </Fill>
);

const Waveform = () => (
  <Fill viewBox={`0 0 ${WAVE_W} ${WAVE_H}`} preserveAspectRatio="none" shapeRendering="crispEdges">
    {[0, 358].map(top => gridLevels.map(y => (
      <rect key={top + y} y={top + y} width={WAVE_W} height="1" fill={colors.grid} />
    )))}
    {majorTicks.map(x => (
      <rect key={x} x={x} width="1" height={WAVE_H} fill={colors.grid} />
    ))}
    <rect y="357" width={WAVE_W} height="1" fill="#7c7c7c" />
    {[178, 536].map(y => (
      <g key={y}>
        <rect y={y} width={WAVE_W} height="1" fill={colors.wave} />
        <path d={`M31 ${y + 0.5}H1270`} stroke="#c21f50" strokeDasharray="17 9 4 13" />
      </g>
    ))}
    <path d={leftPath} fill={colors.wave} />
    <path d={rightPath} fill={colors.wave} />
    <rect width="1" height={WAVE_H} fill="#b00018" />
    <rect x="12" y="2" width="12" height="12" fill="#a0a0a0" />
    <path d="M23 3v10H13z" fill="#333" />
  </Fill>
);

const DbScale = () => (
  <Fill>
    {[0, 358].map(top => (
      <g key={top}>
        {[...dbMinor, ...dbMinor.map(y => 356 - y)].map(y => (
          <line key={y} x2="3" y1={pct(top + y + 0.5, WAVE_H)} y2={pct(top + y + 0.5, WAVE_H)} stroke="#8a8a8a" />
        ))}
        {[...gridLevels, 178].map(y => (
          <line key={y} x2="5" y1={pct(top + y + 0.5, WAVE_H)} y2={pct(top + y + 0.5, WAVE_H)} stroke="#8a8a8a" />
        ))}
        <text x="7" y={pct(top + 12, WAVE_H)}>dB</text>
        {dbLabels.map(([y, label]) => (
          <text key={y} x="7" y={pct(top + y + 4, WAVE_H)}>{label}</text>
        ))}
      </g>
    ))}
  </Fill>
);

const EditorPanel = () => (
  <Editor>
    <Tabs $height={35} $top={4} $left={9}>
      <Tab $active>Editor: Wired (original) 48000 1.wav <Icon name="menu" /></Tab>
      <Tab>Mixer</Tab>
    </Tabs>
    <EditorRow $height={28} $below={17}>
      <Stretch $border="0 0 0 1px"><Overview /></Stretch>
      <SideTools $gap={12} $left={12}>
        <Icon name="zoomFull" />
        <Icon name="list" />
      </SideTools>
    </EditorRow>
    <EditorRow $height={25}>
      <Stretch $border="1px 1px 0 1px"><Ruler /></Stretch>
      <SideTools $gap={7} $left={7}>
        <Tool $active $width={21} aria-label="Snapping"><Icon name="magnet" /></Tool>
        <Icon name="marker" />
      </SideTools>
    </EditorRow>
    <Canvas>
      <WaveArea><Waveform /></WaveArea>
      <Scale><DbScale /></Scale>
      <Channels>
        <ChannelButton>L</ChannelButton>
        <ChannelButton>R</ChannelButton>
      </Channels>
      <Hud>
        <HudGrip><Icon name="grip" /></HudGrip>
        <Icon name="bars" />
        <Icon name="knob" />
        <span><b>+0</b> dB</span>
        <HudPin aria-label="Pin"><Icon name="pin" /></HudPin>
      </Hud>
    </Canvas>
    <SplitBar>
      <span />
      <i />
      <svg width="6" height="3" aria-hidden="true"><path d="M0 3l3-3 3 3z" fill="#777" /></svg>
    </SplitBar>
    <Transport>
      <Clock>0:00.878</Clock>
      <ToolGroup>
        {transport.map(name => (
          <Tool key={name} $width={30} $bright={name !== 'stop' && name !== 'pause'} aria-label={name}>
            <Icon name={name} />
          </Tool>
        ))}
      </ToolGroup>
      <ToolGroup $end>
        {zooms.map(name => (
          <Tool key={name} $width={30} $bright={name !== 'zoomSlot'} aria-label={name}>
            <Icon name={name} />
          </Tool>
        ))}
      </ToolGroup>
    </Transport>
  </Editor>
);

const SoundPanel = () => (
  <Panel $width={101}>
    <SideTitle>Essential Sour</SideTitle>
    <SideRow $height={30}>No Selection</SideRow>
    <SideRow $height={36} $off>Preset:<span /></SideRow>
    <SideRow $height={31} />
    <Rule />
    <SideScroll><Thumb $width={31} /></SideScroll>
  </Panel>
);

const METER_W = 1104;

const LevelsPanel = () => (
  <Panel>
    <Tabs $height={31}>
      <Tab $active $plain>Levels <Icon name="menu" /></Tab>
    </Tabs>
    <Meter>
      <Fill viewBox="0 0 1102 61" preserveAspectRatio="none" shapeRendering="crispEdges">
        <path d="M1.500 0v30M1.500 31v30" stroke="#f2ee3c" />
        <path d="M1093.500 0v61M1094 30.500h9" stroke="#000" />
      </Fill>
    </Meter>
    <MeterScale>
      <Fill $size={10}>
        {[...Array(61)].map((_, i) => {
          const x = pct(2.6 + i * 18.165, METER_W);
          return <line key={i} x1={x} x2={x} y2={i % 3 ? 2 : 4} stroke="#8a8a8a" />;
        })}
        {[...Array(21)].map((_, i) => (
          <text key={i} x={i ? pct(2.6 + i * 54.495, METER_W) : 6} y="15" textAnchor="middle">
            {i ? String(i * 3 - 60) : 'dB'}
          </text>
        ))}
      </Fill>
    </MeterScale>
  </Panel>
);

const SelectionPanel = () => (
  <Panel $width={367}>
    <Tabs $height={29}>
      <Tab $active $plain>Selection/View <Icon name="menu" /></Tab>
    </Tabs>
    <RangeTable>
      <colgroup>
        <col style={{ width: 51 }} />
        <col style={{ width: 72 }} />
        <col style={{ width: 70 }} />
        <col />
      </colgroup>
      <thead>
        <tr><th /><th>Start</th><th>End</th><th>Duration</th></tr>
      </thead>
      <tbody>
        <tr><th>Selection</th><td>0:00.878</td><td>0:00.878</td><td>0:00.000</td></tr>
        <tr><th>View</th><td>0:00.878</td><td>0:06.174</td><td>0:05.295</td></tr>
      </tbody>
    </RangeTable>
  </Panel>
);

const App = () => (
  <Page>
    <GlobalStyle />
    <Window>
      <TitleBar>
        <Lights>
          <Light $color="#fc4f52" aria-label="Close" />
          <Light $color="#fdb23c" aria-label="Minimize" />
          <Light $color="#14c144" aria-label="Zoom" />
        </Lights>
        Adobe Audition
      </TitleBar>
      <TopBar />
      <Body>
        <Column $width={429}>
          <FilesPanel />
          <PropertiesPanel />
          <HistoryPanel />
        </Column>
        <Column>
          <Split>
            <EditorPanel />
            <SoundPanel />
          </Split>
          <Split $height={116}>
            <LevelsPanel />
            <SelectionPanel />
          </Split>
        </Column>
      </Body>
      <StatusBar>
        Copied in 1.91 seconds
        <StatusItem $first $width={50} />
        <StatusItem $width={101} />
        <StatusItem $width={186}>48000 Hz <Dot>●</Dot> 32-bit (float) <Dot>●</Dot> Stereo</StatusItem>
        <StatusItem $width={61}>68.93 MB</StatusItem>
        <StatusItem $width={66} $pad={17}>3:08.212</StatusItem>
        <StatusItem $width={82}>12.33 GB free</StatusItem>
        <StatusItem $width={58} />
      </StatusBar>
    </Window>
  </Page>
);

export default App;
